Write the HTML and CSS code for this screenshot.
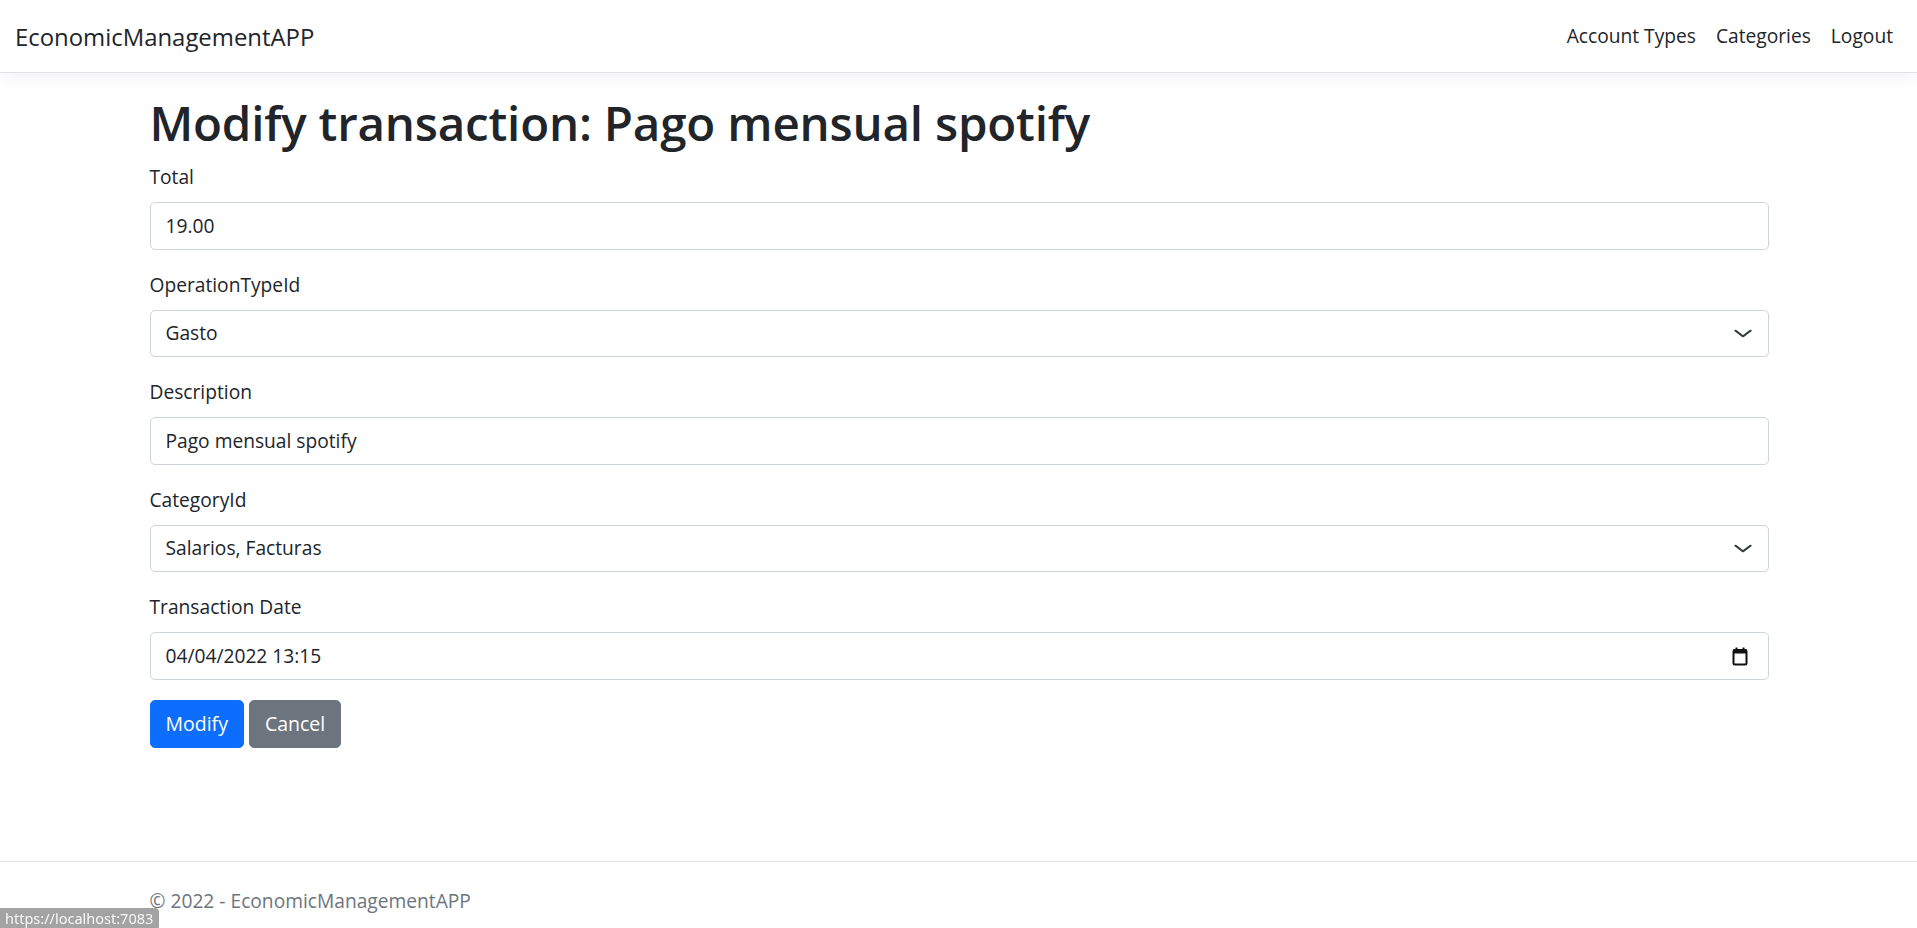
FILE: index.html
```html
<!DOCTYPE html>
<html lang="en">
<head>
<meta charset="utf-8">
<title>Modify transaction - EconomicManagementAPP</title>
<link rel="stylesheet" href="styles.css">
</head>
<body>
<header class="navbar">
  <div class="navbar-inner">
    <a class="brand" href="#">EconomicManagementAPP</a>
    <nav class="nav">
      <a class="nav-link" href="#">Account Types</a>
      <a class="nav-link" href="#">Categories</a>
      <a class="nav-link" href="#">Logout</a>
    </nav>
  </div>
</header>

<div class="container main">
  <h1 class="title">Modify transaction: Pago mensual spotify</h1>
  <form class="form">
    <div class="field">
      <label class="form-label">Total</label>
      <input class="form-control" type="text" value="19.00">
    </div>
    <div class="field">
      <label class="form-label">OperationTypeId</label>
      <div class="form-control picker">
        <span>Gasto</span>
        <svg class="chevron" viewBox="0 0 16 16" width="20" height="15" preserveAspectRatio="none"><path d="m2 5 6 6 6-6" fill="none" stroke="#343a40" stroke-width="2" stroke-linecap="round" stroke-linejoin="round"/></svg>
      </div>
    </div>
    <div class="field">
      <label class="form-label">Description</label>
      <input class="form-control" type="text" value="Pago mensual spotify">
    </div>
    <div class="field">
      <label class="form-label">CategoryId</label>
      <div class="form-control picker">
        <span>Salarios, Facturas</span>
        <svg class="chevron" viewBox="0 0 16 16" width="20" height="15" preserveAspectRatio="none"><path d="m2 5 6 6 6-6" fill="none" stroke="#343a40" stroke-width="2" stroke-linecap="round" stroke-linejoin="round"/></svg>
      </div>
    </div>
    <div class="field">
      <label class="form-label">Transaction Date</label>
      <div class="form-control picker date">
        <span>04/04/2022 13:15</span>
        <svg class="calendar" viewBox="0 0 16 20" width="16" height="20"><rect x="1.5" y="4" width="13" height="14.5" rx="1.5" fill="none" stroke="#111" stroke-width="2"/><rect x="1" y="3.5" width="14" height="4" fill="#111"/><rect x="3.5" y="1.5" width="2" height="3" fill="#111"/><rect x="10.5" y="1.5" width="2" height="3" fill="#111"/></svg>
      </div>
    </div>
    <div class="actions">
      <button type="button" class="btn btn-primary">Modify</button>
      <button type="button" class="btn btn-secondary">Cancel</button>
    </div>
  </form>
</div>

<footer class="footer">
  <div class="container">© 2022 - EconomicManagementAPP</div>
</footer>

<div class="status-bubble">https://localhost:7083</div>
</body>
</html>
```

FILE: styles.css
```css
* { box-sizing: border-box; }

html, body { height: 100%; }

body {
  margin: 0;
  min-height: 100vh;
  display: flex;
  flex-direction: column;
  font-family: "Segoe UI", "Open Sans", "Noto Sans", "Liberation Sans", sans-serif;
  font-size: 19.2px;
  line-height: 30px;
  color: #212529;
  background: #fff;
  overflow: hidden;
}

a { text-decoration: none; color: inherit; }

.navbar {
  background: #fff;
  border-bottom: 1px solid #dee2e6;
  box-shadow: 0 5px 15px rgba(0, 0, 0, 0.05);
  padding: 10px 0;
  position: relative;
  z-index: 1;
}

.navbar-inner {
  display: flex;
  align-items: center;
  justify-content: space-between;
  padding: 0 14px 0 15px;
}

.brand {
  font-size: 23.9px;
  line-height: 37.5px;
  padding: 7.5px 0 7px;
  color: #212529;
}

.nav { display: flex; }

.nav-link {
  padding: 10px 10px;
  color: #212529;
  font-size: 19.2px;
  line-height: 30px;
}

.container {
  width: 100%;
  max-width: 1650px;
  margin: 0 auto;
  padding: 0 15px 0 16px;
}

.main {
  padding-top: 20px;
  flex: 1;
}

.title {
  font-size: 47.5px;
  font-weight: 600;
  line-height: 60px;
  margin: 0 0 9px;
  letter-spacing: -0.2px;
}

.form { margin: 0; }

.field { margin-bottom: 20px; }

.form-label {
  display: block;
  margin-bottom: 10px;
  line-height: 30px;
}

.form-control {
  display: block;
  width: 100%;
  height: 47.5px;
  padding: 7.5px 15px;
  font: inherit;
  font-size: 19.2px;
  line-height: 30px;
  color: #212529;
  background: #fff;
  border: 1px solid #ced4da;
  border-radius: 5px;
  outline: none;
}

.picker {
  display: flex;
  align-items: center;
  justify-content: space-between;
}

.chevron { flex: none; }

.date { padding-right: 20px; }
.calendar { flex: none; }

.actions {
  display: flex;
  gap: 5px;
}

.btn {
  font: inherit;
  font-size: 19.5px;
  line-height: 30px;
  padding: 8px 15px;
  border: 1px solid transparent;
  border-radius: 5px;
  color: #fff;
  cursor: pointer;
}

.btn-primary { background: #0d6efd; border-color: #0d6efd; }
.btn-secondary { background: #6c757d; border-color: #6c757d; }

.footer {
  border-top: 1px solid #dee2e6;
  height: 67px;
  flex: none;
  color: #6c757d;
  line-height: 30px;
  padding-top: 24px;
  white-space: nowrap;
}

.status-bubble {
  position: fixed;
  left: 0;
  bottom: 0;
  height: 20px;
  padding: 0 6px 0 5px;
  background: #a3a3a3;
  color: #f7f7f7;
  font-size: 14.5px;
  line-height: 20px;
  border-top-right-radius: 4px;
  font-family: "Segoe UI", "Noto Sans", "Liberation Sans", sans-serif;
}
```
